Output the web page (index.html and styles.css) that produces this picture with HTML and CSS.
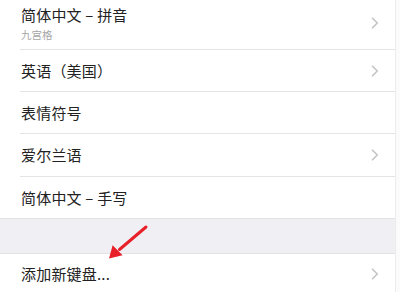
FILE: index.html
```html
<!DOCTYPE html>
<html lang="zh-CN">
<head>
<meta charset="utf-8">
<link rel="stylesheet" href="styles.css">
</head>
<body>
<div class="screen">
  <div class="panel">
    <ul class="list">
      <li class="row row-tall">
        <div class="text">
          <div class="title">简体中文 – 拼音</div>
          <div class="sub">九宫格</div>
        </div>
        <svg class="chev" viewBox="0 0 8 12"><path d="M1.5 1.2 L6.3 6 L1.5 10.8" /></svg>
      </li>
      <li class="row">
        <div class="title">英语（美国）</div>
        <svg class="chev" viewBox="0 0 8 12"><path d="M1.5 1.2 L6.3 6 L1.5 10.8" /></svg>
      </li>
      <li class="row">
        <div class="title">表情符号</div>
      </li>
      <li class="row row-43">
        <div class="title">爱尔兰语</div>
        <svg class="chev" viewBox="0 0 8 12"><path d="M1.5 1.2 L6.3 6 L1.5 10.8" /></svg>
      </li>
      <li class="row row-last">
        <div class="title">简体中文 – 手写</div>
      </li>
    </ul>
    <div class="band"></div>
    <ul class="list">
      <li class="row row-last row-add">
        <div class="title">添加新键盘...</div>
        <svg class="chev" viewBox="0 0 8 12"><path d="M1.5 1.2 L6.3 6 L1.5 10.8" /></svg>
      </li>
    </ul>
  </div>
  <div class="edge"></div>
  <svg class="arrow" viewBox="0 0 400 292" width="400" height="292">
    <path d="M146 227 L119.5 249.5" class="shaft"/>
    <polygon points="109,258.5 112.6,245.2 122.6,255.3" class="head"/>
  </svg>
</div>
</body>
</html>
```
FILE: styles.css
```css
* { box-sizing: border-box; }
html, body {
  margin: 0;
  padding: 0;
  background: #ffffff;
}
body {
  width: 400px;
  height: 292px;
  overflow: hidden;
  font-family: "Noto Sans CJK SC", "Noto Sans", sans-serif;
}
.screen {
  position: relative;
  display: flex;
  width: 400px;
  height: 292px;
  overflow: hidden;
}
.panel {
  width: 395px;
  flex: none;
  background: #ffffff;
}
.edge {
  flex: 1;
  background: #fbfbfb;
  border-left: 1px solid #ececec;
}
.list {
  list-style: none;
  margin: 0;
  padding: 0;
}
.list:first-child {
  margin-top: -3px;
}
.row {
  display: flex;
  align-items: center;
  justify-content: space-between;
  height: 42px;
  margin-left: 20px;
  padding-left: 1px;
  padding-right: 16px;
  border-bottom: 1px solid #e4e4e6;
}
.row-tall { height: 53px; }
.row-43 { height: 43px; }
.row-last {
  border-bottom: none;
  height: 41px;
}
.row-add { height: 40px; }
.text {
  display: flex;
  flex-direction: column;
  gap: 3px;
}
.title {
  font-size: 15px;
  line-height: 20px;
  color: #222222;
  letter-spacing: 0.2px;
}
.sub {
  font-size: 10.5px;
  line-height: 14px;
  color: #a6a6a6;
}
.chev {
  width: 8px;
  height: 12px;
  flex: none;
}
.chev path {
  fill: none;
  stroke: #c4c4c8;
  stroke-width: 1.6;
  stroke-linecap: round;
  stroke-linejoin: round;
}
.band {
  height: 36px;
  background: #f0f0f4;
  border-top: 1px solid #e2e2e5;
  border-bottom: 1px solid #e2e2e5;
}
.arrow {
  position: absolute;
  left: 0;
  top: 0;
  pointer-events: none;
}
.shaft {
  stroke: #e8202a;
  stroke-width: 3;
  stroke-linecap: round;
  fill: none;
}
.head {
  fill: #e8202a;
}
```
